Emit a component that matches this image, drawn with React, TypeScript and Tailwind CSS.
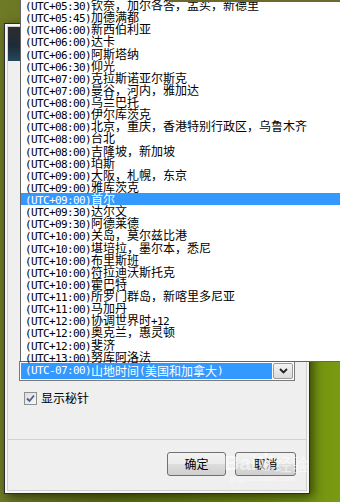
import React from 'react';

const zones = [
  "(UTC+05:30)钦奈，加尔各答，孟买，新德里",
  "(UTC+05:45)加德满都",
  "(UTC+06:00)新西伯利亚",
  "(UTC+06:00)达卡",
  "(UTC+06:00)阿斯塔纳",
  "(UTC+06:30)仰光",
  "(UTC+07:00)克拉斯诺亚尔斯克",
  "(UTC+07:00)曼谷，河内，雅加达",
  "(UTC+08:00)乌兰巴托",
  "(UTC+08:00)伊尔库茨克",
  "(UTC+08:00)北京，重庆，香港特别行政区，乌鲁木齐",
  "(UTC+08:00)台北",
  "(UTC+08:00)吉隆坡，新加坡",
  "(UTC+08:00)珀斯",
  "(UTC+09:00)大阪，札幌，东京",
  "(UTC+09:00)雅库茨克",
  "(UTC+09:00)首尔",
  "(UTC+09:30)达尔文",
  "(UTC+09:30)阿德莱德",
  "(UTC+10:00)关岛，莫尔兹比港",
  "(UTC+10:00)堪培拉，墨尔本，悉尼",
  "(UTC+10:00)布里斯班",
  "(UTC+10:00)符拉迪沃斯托克",
  "(UTC+10:00)霍巴特",
  "(UTC+11:00)所罗门群岛，新喀里多尼亚",
  "(UTC+11:00)马加丹",
  "(UTC+12:00)协调世界时+12",
  "(UTC+12:00)奥克兰，惠灵顿",
  "(UTC+12:00)斐济",
  "(UTC+13:00)努库阿洛法",
];

// ascii runs get a narrow mono face so they sit at half the CJK width
const Mixed = ({ text }: { text: string }) => (
  <>
    {text.split(/([\x20-\x7e]+)/).filter(Boolean).map((part, i) =>
      /^[\x20-\x7e]+$/.test(part) ? (
        <span key={i} className="block leading-[12px] font-['DejaVu_Sans_Mono',monospace] text-[11px] tracking-[-0.62px]">{part}</span>
      ) : (
        <span key={i} className="block leading-[12px]">{part}</span>
      )
    )}
  </>
);

const App = () => {
  return (
    <div className="relative w-[340px] h-[502px] overflow-hidden bg-[linear-gradient(90deg,#6f7a26_0%,#5d6f12_30%,#6a860f_75%,#7a9a12_100%)] font-['Noto_Sans_CJK_SC',sans-serif] text-[12px] text-black">
      {/* dialog window */}
      <div className="ml-[4px] mt-[23px] w-[306px] h-[471px] border border-[#2c2c2c] bg-[#f6f6f6] p-[2px] shadow-[3px_3px_10px_rgba(0,0,0,0.55)]">
        <div className="flex flex-col h-full bg-[#efefef] border border-[#d0d0d0]">
          <div className="h-[34px] bg-[linear-gradient(180deg,#2d2d2d_0%,#1c2c38_55%,#23485a_100%)]" />

          <div className="mt-[300px] ml-[11px] mr-[11px] flex h-[20px] border border-[#7a7a7a] bg-white">
            <div className="m-px flex-1 flex items-center bg-[#3399ff] text-white pl-[4px] whitespace-nowrap overflow-hidden">
              <Mixed text="(UTC-07:00)山地时间(美国和加拿大)" />
            </div>
            <div className="w-[20px] my-px mr-px flex items-center justify-center rounded-[2px] border border-[#9a9a9a] bg-[linear-gradient(180deg,#f4f4f4,#dcdcdc)]">
              <svg width="9" height="6" viewBox="0 0 9 6">
                <path d="M1 1 L4.5 4.5 L8 1" fill="none" stroke="#222" strokeWidth="1.8" />
              </svg>
            </div>
          </div>

          <div className="mt-[10px] ml-[16px] flex items-center gap-[4px] h-[14px]">
            <div className="w-[13px] h-[13px] border border-[#8e8f8f] bg-[linear-gradient(135deg,#dcdcdc,#f8f8f8)] flex items-center justify-center">
              <svg width="9" height="9" viewBox="0 0 9 9">
                <path d="M1 4.5 L3.5 7 L8 1.5" fill="none" stroke="#4a5d8a" strokeWidth="1.8" />
              </svg>
            </div>
            <span className="leading-[14px]">显示秘针</span>
          </div>

          <div className="mt-[34px] border-t border-[#d2d2d2] flex-1 flex justify-end gap-[9px] pt-[12px] pr-[10px]">
            <button className="w-[59px] h-[24px] rounded-[3px] border border-[#707070] bg-[linear-gradient(180deg,#f2f2f2_0%,#ebebeb_50%,#dddddd_51%,#cfcfcf_100%)] text-[12px]">确定</button>
            <button className="w-[61px] h-[24px] rounded-[3px] border border-[#707070] bg-[linear-gradient(180deg,#f2f2f2_0%,#ebebeb_50%,#dddddd_51%,#cfcfcf_100%)] text-[12px]">取消</button>
          </div>
        </div>
      </div>

      {/* open drop-down list */}
      <div className="absolute left-[20px] top-[-1px] w-[330px] h-[363px] bg-white border-l border-b border-[#646464]">
        {zones.map((z, i) => (
          <div
            key={i}
            className={`h-[12.13px] flex items-baseline pl-[4px] whitespace-nowrap ${i === 16 ? 'bg-[#3399ff] text-white' : ''}`}
          >
            <Mixed text={z} />
          </div>
        ))}
      </div>
      <div className="absolute left-[170px] top-0 right-0 h-[2px] bg-[#6b6a2c]" />

      {/* watermark */}
      <div className="absolute left-[224px] top-[452px] text-white/55 pointer-events-none">
        <div className="flex items-end">
          <span className="font-['Liberation_Sans',sans-serif] font-bold text-[21px] leading-[22px]">Bai</span>
          <svg width="18" height="20" viewBox="0 0 18 20" className="mb-[2px]">
            <g fill="rgba(255,255,255,0.55)">
              <ellipse cx="4" cy="6" rx="2" ry="2.6" />
              <ellipse cx="9" cy="3" rx="2" ry="2.6" />
              <ellipse cx="14" cy="6" rx="2" ry="2.6" />
              <path d="M9 9 C5 9 3 14 4 17 C5 19 13 19 14 17 C15 14 13 9 9 9Z" />
            </g>
          </svg>
          <span className="text-[17px] leading-[20px]">经验</span>
        </div>
        <div className="font-['Liberation_Sans',sans-serif] text-[8px] leading-[9px] pl-[6px]">jingyan.baidu.com</div>
      </div>
    </div>
  );
};

export default App;
